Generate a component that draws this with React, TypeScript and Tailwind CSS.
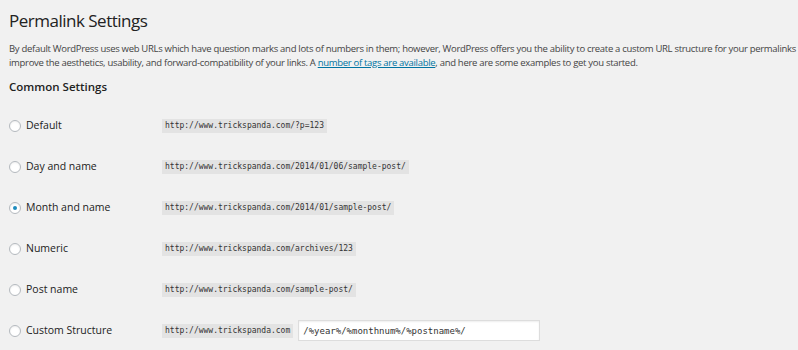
import React from 'react';

const rows = [
  { label: 'Default', url: 'http://www.trickspanda.com/?p=123' },
  { label: 'Day and name', url: 'http://www.trickspanda.com/2014/01/06/sample-post/' },
  { label: 'Month and name', url: 'http://www.trickspanda.com/2014/01/sample-post/', checked: true },
  { label: 'Numeric', url: 'http://www.trickspanda.com/archives/123' },
  { label: 'Post name', url: 'http://www.trickspanda.com/sample-post/' },
];

function Radio({ checked }: { checked?: boolean }) {
  return (
    <span className="flex h-[12px] w-[12px] shrink-0 items-center justify-center rounded-full border border-[#b4b9be] bg-white shadow-[inset_0_1px_2px_rgba(0,0,0,0.07)]">
      {checked && <span className="h-[4px] w-[4px] rounded-full bg-[#1e8cbe]" />}
    </span>
  );
}

function Code({ children }: { children: React.ReactNode }) {
  return (
    <code className="bg-[#e3e3e3] px-[3px] py-[2px] font-['DejaVu_Sans_Mono',monospace] text-[8px] leading-[10px] text-[#333]">
      {children}
    </code>
  );
}

export default function App() {
  return (
    <div className="h-[350px] w-[798px] overflow-hidden bg-[#f1f1f1] pl-[9px] font-['Open_Sans',sans-serif] text-[#444]">
      <h2 className="pt-[9px] text-[17px] font-normal leading-[24px] tracking-[-0.5px] text-[#222]">Permalink Settings</h2>
      <p className="mt-[9px] whitespace-nowrap text-[9.5px] leading-[14px] tracking-[-0.3px]">
        By default WordPress uses web URLs which have question marks and lots of numbers in them; however, WordPress offers you the ability to create a custom URL structure for your permalinks and to
        <br />
        improve the aesthetics, usability, and forward-compatibility of your links. A{' '}
        <a className="text-[#0074a2] underline">number of tags are available</a>, and here are some examples to get you started.
      </p>
      <h3 className="mt-[9px] text-[11.5px] font-semibold leading-[16px] text-[#222]">Common Settings</h3>
      <div className="mt-[10px] flex flex-col">
        {rows.map((r) => (
          <div key={r.label} className="flex h-[41px] items-center">
            <div className="flex w-[153px] items-center gap-[5px]">
              <Radio checked={r.checked} />
              <span className="text-[10.5px] text-[#222]">{r.label}</span>
            </div>
            <Code>{r.url}</Code>
          </div>
        ))}
        <div className="flex h-[41px] items-center">
          <div className="flex w-[153px] items-center gap-[5px]">
            <Radio />
            <span className="text-[10.5px] text-[#222]">Custom Structure</span>
          </div>
          <Code>http://www.trickspanda.com</Code>
          <input
            readOnly
            value="/%year%/%monthnum%/%postname%/"
            className="ml-[5px] h-[21px] w-[242px] border border-[#ddd] bg-white px-[4px] font-['DejaVu_Sans_Mono',monospace] text-[9px] text-[#333] shadow-[inset_0_1px_2px_rgba(0,0,0,0.07)] outline-none"
          />
        </div>
      </div>
    </div>
  );
}
